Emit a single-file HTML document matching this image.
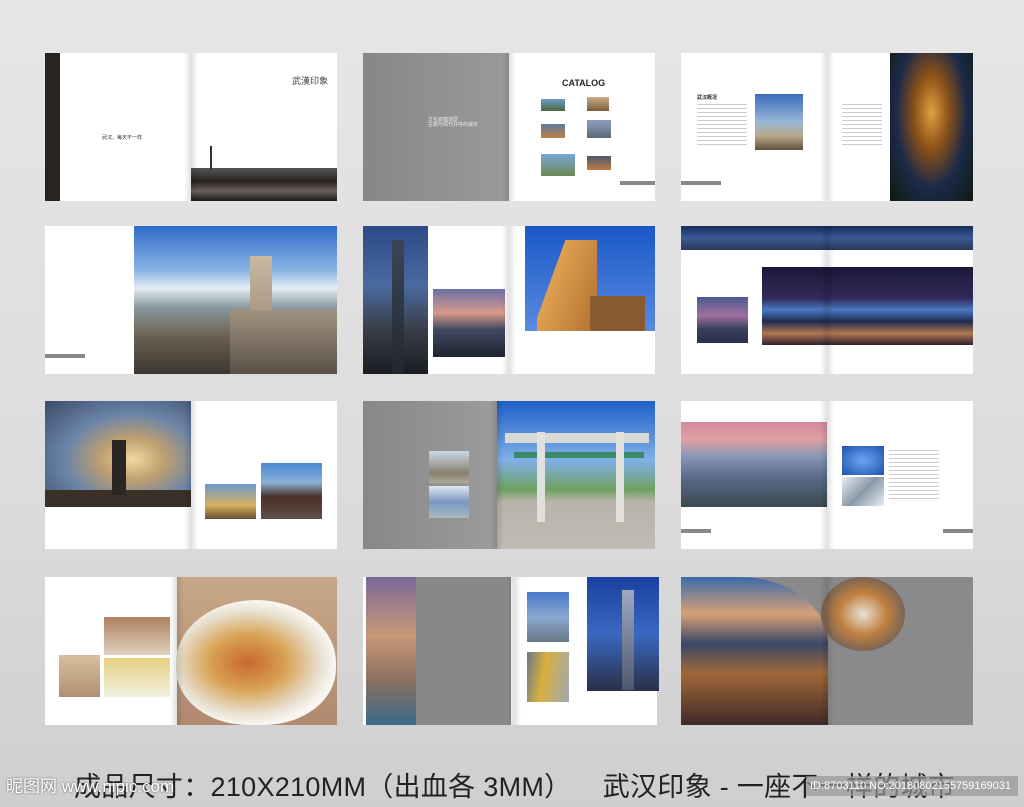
<!DOCTYPE html>
<html><head><meta charset="utf-8"><style>
*{margin:0;padding:0;box-sizing:border-box}
body{width:1024px;height:807px;overflow:hidden;background:linear-gradient(#e6e6e6,#dcdcdc 60%,#cfcfcf);position:relative;font-family:"Liberation Sans","Noto Sans CJK SC",sans-serif}
.a{position:absolute}
.w{background:#fff}
.g{background:#8c8c8c}
.fold{position:absolute;width:14px;background:linear-gradient(90deg,rgba(0,0,0,0),rgba(0,0,0,.12),rgba(0,0,0,0))}
.t{position:absolute;font-size:4px;color:#555;line-height:5px}
</style></head><body>
<!-- Row 1 -->
<div class="a w" style="left:45px;top:53px;width:292px;height:148px"></div>
<div class="a" style="left:45px;top:53px;width:15px;height:148px;background:#2b2321"></div>
<div class="t" style="left:102px;top:136px;font-size:5px;color:#333">武汉，每天不一样</div>
<div class="a" style="left:191px;top:168px;width:146px;height:33px;background:linear-gradient(#555,#2a2220 40%,#6a6060 70%,#1d1716)"></div>
<div class="a" style="left:210px;top:146px;width:2px;height:24px;background:#333"></div>
<div class="t" style="left:292px;top:76px;font-size:9px;line-height:10px;color:#444">武漢印象</div>
<div class="fold" style="left:184px;top:53px;height:148px"></div>

<div class="a g" style="left:363px;top:53px;width:146px;height:148px;background:linear-gradient(90deg,#878787,#9a9a9a)"></div>
<div class="a w" style="left:509px;top:53px;width:146px;height:148px"></div>
<div class="t" style="left:428px;top:118px;color:#eee;font-size:5px">文化底蕴浓厚<br>古典与现代并存的城市</div>
<div class="a" style="left:562px;top:78px;font-size:9px;font-weight:bold;color:#222">CATALOG</div>
<div class="a" style="left:541px;top:99px;width:24px;height:12px;background:linear-gradient(#6c9ac8,#4a6a3c)"></div>
<div class="a" style="left:587px;top:97px;width:22px;height:14px;background:linear-gradient(#c9b087,#7a5a3a)"></div>
<div class="a" style="left:541px;top:124px;width:24px;height:14px;background:linear-gradient(#5a7aa0,#c08040)"></div>
<div class="a" style="left:587px;top:120px;width:24px;height:18px;background:linear-gradient(#8aa0c0,#606878)"></div>
<div class="a" style="left:541px;top:154px;width:34px;height:22px;background:linear-gradient(#7aa6d8,#6a8a50)"></div>
<div class="a" style="left:587px;top:156px;width:24px;height:14px;background:linear-gradient(#4a5870,#c07a40)"></div>
<div class="a" style="left:620px;top:181px;width:35px;height:4px;background:#888"></div>
<div class="fold" style="left:502px;top:53px;height:148px"></div>

<div class="a w" style="left:681px;top:53px;width:292px;height:148px"></div>
<div class="a" style="left:755px;top:94px;width:48px;height:56px;background:linear-gradient(#3a6cb8,#9ab8d8 50%,#b8a888 75%,#605040)"></div>
<div class="a" style="left:890px;top:53px;width:83px;height:148px;background:radial-gradient(ellipse at 50% 40%,#e0a040,#8a5018 30%,#1c2a48 60%,#0c1a10)"></div>
<div class="t" style="left:697px;top:96px;font-weight:bold;color:#222;font-size:5px">武汉概况</div>
<div class="a" style="left:697px;top:104px;width:50px;height:42px;background:repeating-linear-gradient(#ccc 0 1px,transparent 1px 4px)"></div>
<div class="a" style="left:842px;top:104px;width:40px;height:42px;background:repeating-linear-gradient(#ccc 0 1px,transparent 1px 4px)"></div>
<div class="a" style="left:681px;top:181px;width:40px;height:4px;background:#888"></div>
<div class="fold" style="left:820px;top:53px;height:148px"></div>

<!-- Row 2 -->
<div class="a w" style="left:45px;top:226px;width:292px;height:148px"></div>
<div class="a" style="left:134px;top:226px;width:203px;height:148px;background:linear-gradient(#2f6cc8,#8ab4e4 30%,#e6eef6 42%,#8a98a0 55%,#6a6050 75%,#3a3630)"></div>
<div class="a" style="left:250px;top:256px;width:22px;height:118px;background:linear-gradient(#c8b8a0,#8a7a68)"></div>
<div class="a" style="left:230px;top:310px;width:107px;height:64px;background:linear-gradient(#a09480,#5a5048)"></div>
<div class="a" style="left:45px;top:354px;width:40px;height:4px;background:#888"></div>

<div class="a w" style="left:363px;top:226px;width:292px;height:148px"></div>
<div class="a" style="left:363px;top:226px;width:65px;height:148px;background:linear-gradient(#2c4a88,#4a6aa0 40%,#3a3e48 70%,#1a1c22)"></div>
<div class="a" style="left:392px;top:240px;width:12px;height:134px;background:linear-gradient(#3a4658,#222830)"></div>
<div class="a" style="left:433px;top:289px;width:72px;height:68px;background:linear-gradient(#6a70a8,#d89a8a 35%,#404860 60%,#202430)"></div>
<div class="a" style="left:525px;top:226px;width:130px;height:105px;background:linear-gradient(#1a58c8,#5a8ae0)"></div>
<div class="a" style="left:537px;top:240px;width:60px;height:91px;background:linear-gradient(110deg,transparent 30%,#e0a050 31%,#b07030)"></div>
<div class="a" style="left:590px;top:296px;width:55px;height:35px;background:#8a5a30"></div>
<div class="fold" style="left:502px;top:226px;height:148px"></div>

<div class="a w" style="left:681px;top:226px;width:292px;height:148px"></div>
<div class="a" style="left:681px;top:226px;width:292px;height:24px;background:linear-gradient(#1a2a58,#3a5a98 50%,#2a3858)"></div>
<div class="a" style="left:762px;top:267px;width:211px;height:78px;background:linear-gradient(#1a1838,#302a5a 40%,#4a78c0 55%,#1e2a50 70%,#b07850 85%,#302030)"></div>
<div class="a" style="left:697px;top:297px;width:51px;height:46px;background:linear-gradient(#4a5890,#a070a0 40%,#38405a 70%,#2a3050)"></div>
<div class="fold" style="left:820px;top:226px;height:148px"></div>

<!-- Row 3 -->
<div class="a w" style="left:45px;top:401px;width:292px;height:148px"></div>
<div class="a" style="left:45px;top:401px;width:146px;height:106px;background:radial-gradient(ellipse at 60% 55%,#f0d8a0,#c0a070 25%,#6a84a8 55%,#3a4a68)"></div>
<div class="a" style="left:45px;top:490px;width:146px;height:17px;background:#3a3028"></div>
<div class="a" style="left:112px;top:440px;width:14px;height:55px;background:#2a2622"></div>
<div class="a" style="left:205px;top:484px;width:51px;height:35px;background:linear-gradient(#6a9ad0,#d8b060 60%,#6a5030)"></div>
<div class="a" style="left:261px;top:463px;width:61px;height:56px;background:linear-gradient(#4a88d0,#8ab0d8 35%,#4a3028 60%,#605048)"></div>
<div class="fold" style="left:184px;top:401px;height:148px"></div>

<div class="a" style="left:363px;top:401px;width:134px;height:148px;background:linear-gradient(90deg,#878787,#9c9c9c)"></div>
<div class="a" style="left:429px;top:451px;width:40px;height:32px;background:linear-gradient(#c8d8e8,#8a8070 70%,#b0a898)"></div>
<div class="a" style="left:429px;top:486px;width:40px;height:32px;background:linear-gradient(#e0e8f0,#7a98c0 50%,#a8b8c0)"></div>
<div class="a" style="left:497px;top:401px;width:158px;height:148px;background:linear-gradient(#2060c8,#80b0e8 40%,#70a060 60%,#b8b4ac 68%,#c0bcb4)"></div>
<div class="a" style="left:505px;top:433px;width:144px;height:10px;background:#d8d8d4"></div>
<div class="a" style="left:514px;top:452px;width:130px;height:6px;background:#3a8a6a"></div>
<div class="a" style="left:537px;top:432px;width:8px;height:90px;background:#e0e0dc"></div>
<div class="a" style="left:616px;top:432px;width:8px;height:90px;background:#e0e0dc"></div>
<div class="fold" style="left:490px;top:401px;height:148px"></div>

<div class="a w" style="left:681px;top:401px;width:292px;height:148px"></div>
<div class="a" style="left:681px;top:422px;width:146px;height:85px;background:linear-gradient(#d08aa0,#e0a0a0 20%,#8a98b8 40%,#5a6a88 65%,#3a4a50)"></div>
<div class="a" style="left:842px;top:446px;width:42px;height:29px;background:radial-gradient(#6aa8f0,#2050b0)"></div>
<div class="a" style="left:842px;top:477px;width:42px;height:29px;background:linear-gradient(135deg,#e8eef4,#8a98a8,#e8eef4)"></div>
<div class="a" style="left:889px;top:450px;width:50px;height:50px;background:repeating-linear-gradient(#ccc 0 1px,transparent 1px 4px)"></div>
<div class="a" style="left:681px;top:529px;width:30px;height:4px;background:#888"></div>
<div class="a" style="left:943px;top:529px;width:30px;height:4px;background:#888"></div>
<div class="fold" style="left:820px;top:401px;height:148px"></div>

<!-- Row 4 -->
<div class="a w" style="left:45px;top:577px;width:292px;height:148px"></div>
<div class="a" style="left:104px;top:617px;width:66px;height:38px;background:linear-gradient(#b08060,#e0d0c0)"></div>
<div class="a" style="left:104px;top:658px;width:66px;height:39px;background:linear-gradient(#e8d080,#f0f0e0)"></div>
<div class="a" style="left:59px;top:655px;width:41px;height:42px;background:linear-gradient(#d8c0a0,#b09070)"></div>
<div class="a" style="left:177px;top:577px;width:160px;height:148px;background:linear-gradient(#c8a888,#b08a70)"></div>
<div class="a" style="left:176px;top:600px;width:160px;height:125px;border-radius:50% 50% 45% 45%;background:radial-gradient(ellipse at 45% 50%,#c86830,#d8a050 30%,#e8e0d0 58%,#f8f6f0 70%)"></div>
<div class="fold" style="left:170px;top:577px;height:148px"></div>

<div class="a w" style="left:363px;top:577px;width:294px;height:148px"></div>
<div class="a" style="left:366px;top:577px;width:50px;height:148px;background:linear-gradient(#7a6898,#c89878 40%,#8a7060 70%,#3a6a88)"></div>
<div class="a" style="left:416px;top:577px;width:95px;height:148px;background:#888"></div>
<div class="a" style="left:527px;top:592px;width:42px;height:50px;background:linear-gradient(#4a78c8,#8aa8d0 50%,#6a7888)"></div>
<div class="a" style="left:527px;top:652px;width:42px;height:50px;background:linear-gradient(100deg,#6a7888,#d8b040 40%,#a0a8b0)"></div>
<div class="a" style="left:587px;top:577px;width:72px;height:114px;background:linear-gradient(#1a40a0,#3a68c0 50%,#2a3048)"></div>
<div class="a" style="left:622px;top:590px;width:12px;height:100px;background:linear-gradient(#a0a8c0,#505870)"></div>
<div class="fold" style="left:507px;top:577px;height:148px"></div>

<div class="a" style="left:681px;top:577px;width:292px;height:148px;background:#8a8a8a"></div>
<div class="a" style="left:681px;top:577px;width:147px;height:148px;border-radius:0 60% 0 0/0 45% 0 0;background:linear-gradient(#3a6aa8,#d8a078 25%,#3a4868 45%,#a06838 65%,#402a28)"></div>
<div class="a" style="left:821px;top:577px;width:84px;height:74px;border-radius:50%;background:radial-gradient(#e8e0d8,#c08040 40%,#3a4a68)"></div>
<div class="fold" style="left:820px;top:577px;height:148px"></div>

<!-- Bottom text -->
<div class="a" style="left:74px;top:765px;font-size:27px;letter-spacing:0.3px;color:#222;white-space:nowrap">成品尺寸：210X210MM（出血各 3MM）&nbsp;&nbsp;&nbsp;&nbsp;武汉印象 - 一座不一样的城市</div>
<div class="a" style="left:6px;top:772px;font-size:17px;color:#fff;text-shadow:0 0 2px #555;white-space:nowrap">昵图网 www.nipic.com</div>
<div class="a" style="left:806px;top:776px;width:212px;height:20px;background:rgba(150,150,150,.7);color:#fff;font-size:11px;line-height:20px;padding-left:4px">ID:8703110 NO:20180802155759169031</div>
</body></html>
